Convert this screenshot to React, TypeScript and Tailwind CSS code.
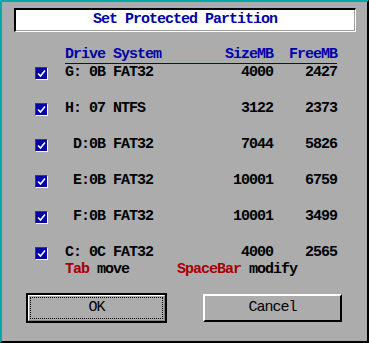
import React from "react";

const rows = [
  { d: "G: 0B FAT32", s: "4000", f: "2427" },
  { d: "H: 07 NTFS", s: "3122", f: "2373" },
  { d: " D:0B FAT32", s: "7044", f: "5826" },
  { d: " E:0B FAT32", s: "10001", f: "6759" },
  { d: " F:0B FAT32", s: "10001", f: "3499" },
  { d: "C: 0C FAT32", s: "4000", f: "2565" },
];

function Check() {
  return (
    <div className="w-[13px] h-[13px] border-t border-l border-[#404040] border-b border-r border-b-white border-r-white bg-[#0000a8] flex items-center justify-center">
      <svg width="9" height="9" viewBox="0 0 9 9">
        <path d="M1 4.5 L3.5 7 L8 1.5" stroke="white" strokeWidth="1.6" fill="none" />
      </svg>
    </div>
  );
}

export default function App() {
  return (
    <div
      className="w-[369px] h-[343px] bg-[#acacac] border-l-2 border-t-2 border-[#00a8a8] border-r-2 border-b-2 border-r-black border-b-black flex flex-col text-[15px] leading-[16px] tracking-[-1px] font-bold text-black"
      style={{ fontFamily: '"Liberation Mono", "DejaVu Sans Mono", monospace' }}
    >
      <div className="mt-[6px] ml-[12px] mr-[11px] h-[24px] border-t-2 border-l-2 border-black border-b border-r border-b-white border-r-white">
        <div className="h-full bg-white border-b border-r border-[#a0a0a0] flex items-center justify-center text-[#0000a8]">
          Set Protected Partition
        </div>
      </div>

      <div className="mt-[15px] ml-[63px] w-[272px] h-[17px] border-b border-[#0000a8] flex text-[#0000a8] whitespace-pre">
        <div className="w-[120px]">Drive System</div>
        <div className="w-[88px] text-right">SizeMB</div>
        <div className="w-[64px] text-right">FreeMB</div>
      </div>

      <div className="mt-[1px] flex flex-col gap-[20px]">
        {rows.map((r, i) => (
          <div key={i} className="flex items-center h-[16px] pl-[33px] whitespace-pre">
            <Check />
            <div className="ml-[17px] w-[120px]">{r.d}</div>
            <div className="w-[88px] text-right">{r.s}</div>
            <div className="w-[64px] text-right">{r.f}</div>
          </div>
        ))}
      </div>

      <div className="mt-[1px] h-[16px] pl-[63px] whitespace-pre">
        <span className="text-[#a80000]">Tab</span>
        <span> move      </span>
        <span className="text-[#a80000]">SpaceBar</span>
        <span> modify</span>
      </div>

      <div className="mt-[15px] pl-[24px] flex items-center">
        <div className="w-[141px] h-[30px] border-2 border-black">
          <div className="h-full border-t border-l border-white border-b border-r border-b-[#808080] border-r-[#808080] p-[1px]">
            <div className="h-full border border-dotted border-black flex items-center justify-center font-normal">
              OK
            </div>
          </div>
        </div>
        <div className="ml-[36px] w-[139px] h-[28px] border-t-2 border-l-2 border-white border-b-2 border-r-2 border-b-black border-r-black flex items-center justify-center font-normal">
          Cancel
        </div>
      </div>
    </div>
  );
}
